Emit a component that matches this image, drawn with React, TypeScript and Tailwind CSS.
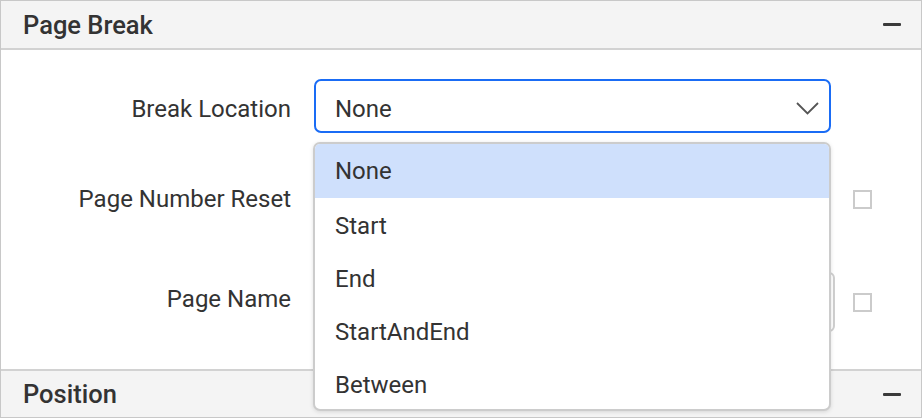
const OPTIONS = ["None", "Start", "End", "StartAndEnd", "Between"];

function Minus() {
  return <span className="block w-[18px] h-[3px] bg-[#3a3a3a] rounded-[1px]" />;
}

function Checkbox() {
  return <span className="block w-[19px] h-[19px] border-2 border-[#cbcbcb] bg-white" />;
}

function SectionHeader({ title }: { title: string }) {
  return (
    <div className="flex items-center justify-between h-full pl-[22px] pr-[20px] bg-[#f4f4f4]">
      <span className="text-[25.5px] font-medium text-[#333] pt-[1px]">{title}</span>
      <Minus />
    </div>
  );
}

export default function App() {
  return (
    <div
      className="relative w-[922px] h-[418px] bg-white border border-[#c8c8c8] flex flex-col overflow-hidden"
      style={{ fontFamily: "Roboto, 'Liberation Sans', sans-serif" }}
    >
      {/* Page Break header */}
      <div className="h-[49px] shrink-0 border-b-2 border-[#d2d2d2]">
        <SectionHeader title="Page Break" />
      </div>

      {/* Body */}
      <div className="h-[319px] shrink-0 flex flex-col pt-[29px] text-[24px] text-[#333]">
        <div className="flex items-center h-[54px]">
          <label className="w-[290px] text-right pt-[5px]">Break Location</label>
          <div className="ml-[23px] w-[517px] h-[54px] border-2 border-[#1a6cf5] rounded-[7px] flex items-center justify-between pl-[19px] pr-[10px]">
            <span className="pt-[5px]">None</span>
            <svg className="mt-[4px]" width="23" height="13" viewBox="0 0 23 13" fill="none">
              <path d="M1 1 L11.5 11.5 L22 1" stroke="#555" strokeWidth="1.8" />
            </svg>
          </div>
        </div>

        <div className="flex items-center h-[54px] mt-[39px]">
          <label className="w-[290px] text-right">Page Number Reset</label>
          <div className="ml-[23px] w-[517px] h-[54px]" />
          <span className="ml-[22px]">
            <Checkbox />
          </span>
        </div>

        <div className="flex items-center h-[60px] mt-[46px]">
          <label className="w-[290px] text-right pb-[6px]">Page Name</label>
          <div className="ml-[23px] w-[521px] h-[60px] border-2 border-[#cfcfcf] rounded-[6px]" />
          <span className="ml-[18px]">
            <Checkbox />
          </span>
        </div>
      </div>

      {/* Position header */}
      <div className="flex-1 border-t-2 border-[#d2d2d2]">
        <SectionHeader title="Position" />
      </div>

      {/* Dropdown popup */}
      <ul className="absolute left-[312px] top-[141px] w-[518px] h-[269px] bg-white border-2 border-[#cccccc] rounded-[7px] shadow-[0_1px_4px_rgba(0,0,0,0.12)] overflow-hidden text-[24px] text-[#333]">
        {OPTIONS.map((o, i) => (
          <li
            key={o}
            className={`flex items-center pl-[20px] ${i === 0 ? "bg-[#cfe0fc] h-[54px]" : "h-[53px] pt-[3px]"}`}
          >
            {o}
          </li>
        ))}
      </ul>
    </div>
  );
}
